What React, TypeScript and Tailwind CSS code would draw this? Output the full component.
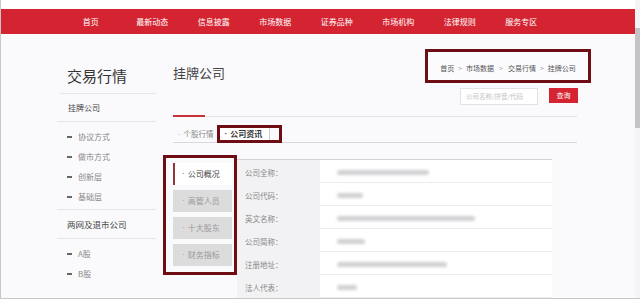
import React from "react";

const navItems = ["首页", "最新动态", "信息披露", "市场数据", "证券品种", "市场机构", "法律规则", "服务专区"];
const sideItemsA = ["协议方式", "做市方式", "创新层", "基础层"];
const sideItemsB = ["A股", "B股"];
const vtabs = ["高管人员", "十大股东", "财务指标"];
const rows: { label: string; w: number }[] = [
  { label: "公司全称：", w: 92 },
  { label: "公司代码：", w: 26 },
  { label: "英文名称：", w: 138 },
  { label: "公司简称：", w: 28 },
  { label: "注册地址：", w: 110 },
  { label: "法人代表：", w: 20 },
];

function Dot() {
  return <span className="font-['Liberation_Sans',sans-serif] mr-[3px]">·</span>;
}

function Dash({ text }: { text: string }) {
  return (
    <div className="flex items-center h-[20px] pl-[12px]">
      <div className="w-[5px] h-[1.5px] bg-[#666]" />
      <span className="ml-[6px] text-[8px] text-[#888]">{text}</span>
    </div>
  );
}

export default function App() {
  return (
    <div className="w-[640px] h-[299px] overflow-hidden flex bg-[#fafafc] font-['Noto_Sans_CJK_SC','Microsoft_YaHei',sans-serif] border-l border-b border-[#c8c8c8]">
      <div className="w-[634px] flex flex-col">
        <div className="h-[9px] bg-white" />
        <div className="h-[25px] bg-[#d42431] flex items-center text-white text-[8px] pl-[59px]">
          {navItems.map((n) => (
            <div key={n} className="w-[61.5px] text-center">{n}</div>
          ))}
        </div>
        <div className="flex flex-1">
          {/* sidebar */}
          <div className="ml-[54px] w-[101px] pt-[32px]">
            <div className="pl-[12px] text-[15px] leading-[20px] text-[#333]">交易行情</div>
            <div className="mt-[7px] ml-[5px] border-b border-[#e6e6e8]" />
            <div className="h-[27px] flex items-center pl-[13px] text-[8px] text-[#444]">挂牌公司</div>
            <div className="ml-[2px] border-b border-[#e6e6e8]" />
            <div className="pt-[5px]">
              {sideItemsA.map((s) => (
                <Dash key={s} text={s} />
              ))}
            </div>
            <div className="mt-[2px] ml-[2px] border-b border-[#e6e6e8]" />
            <div className="h-[28px] flex items-center pl-[12px] text-[8.5px] text-[#444]">两网及退市公司</div>
            <div className="ml-[2px] border-b border-[#e6e6e8]" />
            <div className="pt-[5px]">
              {sideItemsB.map((s) => (
                <Dash key={s} text={s} />
              ))}
            </div>
          </div>
          {/* main */}
          <div className="ml-[7px] w-[428px] flex flex-col">
            <div className="flex justify-between pt-[15px]">
              <div className="pl-[10px] pt-[14px] text-[13px] leading-[20px] text-[#444]">挂牌公司</div>
              <div className="flex flex-col items-end">
                <div className="w-[166px] h-[34px] border-[3px] border-[#6e0e14] flex items-end justify-center pb-[7px] text-[7px] text-[#555] bg-[#fbfbfd]">
                  <span>首页</span>
                  <span className="mx-[4px] text-[#aaa]">&gt;</span>
                  <span>市场数据</span>
                  <span className="mx-[5px] text-[#aaa]">&gt;</span>
                  <span>交易行情</span>
                  <span className="mx-[4px] text-[#aaa]">&gt;</span>
                  <span>挂牌公司</span>
                </div>
                <div className="flex items-start mt-[5px] mr-[13px]">
                  <div className="w-[78px] h-[17px] border border-[#e2e2e4] bg-white flex items-center pl-[5px] text-[6.5px] text-[#c4c4c4]">公司名称/拼音/代码</div>
                  <div className="ml-[11px] w-[29px] h-[15px] bg-[#d42431] text-white text-[7px] flex items-center justify-center">查询</div>
                </div>
              </div>
            </div>
            <div className="mt-[10px] ml-[10px] w-[404px] h-[2px] border-b border-[#e4e4e6] relative">
              <div className="absolute left-0 top-0 w-[32px] h-[1.5px] bg-[#c9303a]" />
            </div>
            <div className="mt-[9px] ml-[10px] w-[404px] h-[17px] border-b border-[#d8d8da] flex items-center">
              <span className="shrink-0 whitespace-nowrap pl-[5px] pr-[3px] text-[7.5px] text-[#888]"><Dot />个股行情</span>
              <div className="w-[65px] shrink-0 h-[18px] border-[3px] border-[#6e0e14] flex items-center">
                <div className="h-full flex items-center whitespace-nowrap pl-[5px] pr-[7px] bg-white border-r border-[#ccc] text-[8px] font-bold text-[#333]"><Dot />公司资讯</div>
              </div>
            </div>
            <div className="mt-[12px] flex items-start">
              <div className="w-[74px] border-[3px] border-[#6e0e14] pl-[7px] pr-[2px] pt-[5px] pb-[6px] flex flex-col gap-[5px]">
                <div className="h-[22px] bg-white border-l-2 border-[#8a3a3d] flex items-center pl-[7px] text-[8px] text-[#444]"><Dot />公司概况</div>
                {vtabs.map((t) => (
                  <div key={t} className="h-[22px] bg-[#dcdcdd] flex items-center pl-[9px] text-[8px] text-[#9a9a9a]"><Dot />{t}</div>
                ))}
              </div>
              <div className="mt-[4px] w-[315px] border-t border-[#d4d4d6] flex">
                <div className="w-[83px] bg-[#f2f2f5]">
                  {rows.map((r) => (
                    <div key={r.label} className="h-[23px] flex items-center pl-[8px] pt-[3px] text-[7.5px] text-[#888]">{r.label}</div>
                  ))}
                </div>
                <div className="flex-1 bg-white">
                  {rows.map((r) => (
                    <div key={r.label} className="h-[23px] border-b border-[#ececee] flex items-center pl-[17px] pt-[2px]">
                      <div className="h-[5px] bg-[#d0d0d3] blur-[1.5px] rounded" style={{ width: r.w }} />
                    </div>
                  ))}
                </div>
              </div>
            </div>
          </div>
        </div>
      </div>
      <div className="w-[5px] bg-[#f4f4f6] flex flex-col">
        <div className="mt-[28px] h-[100px] bg-[#c4c4c6]" />
      </div>
    </div>
  );
}
